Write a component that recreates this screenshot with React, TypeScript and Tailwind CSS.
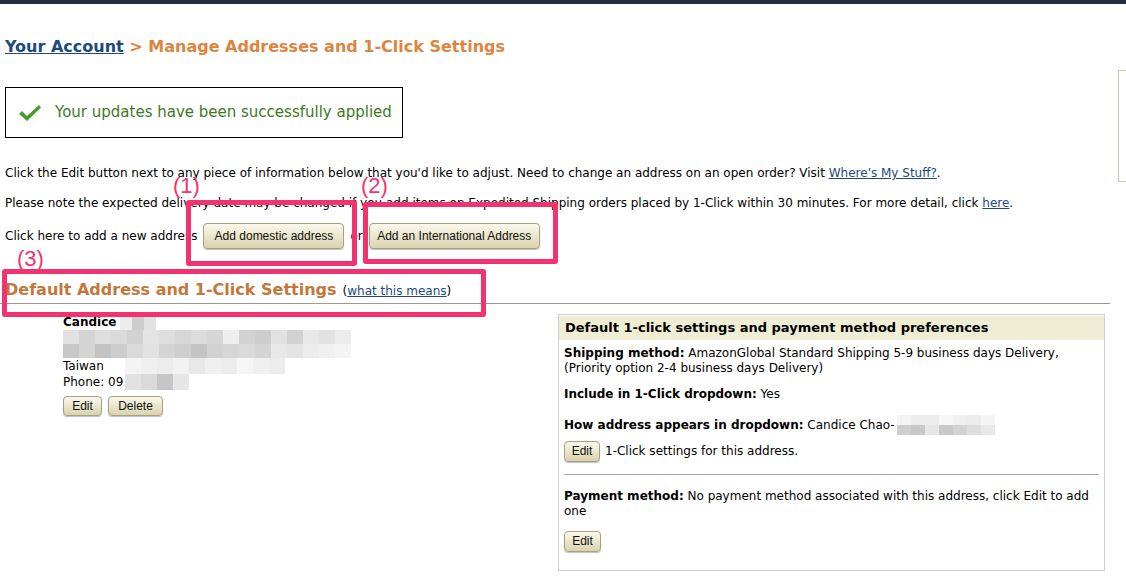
import React from "react";

const V = { fontFamily: '"DejaVu Sans", Verdana, sans-serif' };
const A = { fontFamily: '"Liberation Sans", Arial, sans-serif' };

function Btn({ children, className = "" }: { children: React.ReactNode; className?: string }) {
  return (
    <span
      style={A}
      className={
        "inline-flex items-center justify-center rounded-[4px] border border-[#a7a17f] bg-gradient-to-b from-[#fbf9ec] to-[#d9d3ae] text-[12px] text-[#111] shadow-[0_1px_1px_rgba(0,0,0,0.25)] " +
        className
      }
    >
      {children}
    </span>
  );
}

function Blocks({ shades, h = 16, w = 16 }: { shades: number[]; h?: number; w?: number }) {
  return (
    <span className="inline-flex">
      {shades.map((s, i) => (
        <span
          key={i}
          style={{ width: w, height: h, backgroundColor: `rgb(${s},${s},${s})` }}
          className="block shrink-0"
        />
      ))}
    </span>
  );
}

export default function App() {
  return (
    <div className="w-[1126px] h-[583px] overflow-hidden bg-white relative text-[#000]" style={V}>
      <div className="h-[4px] bg-[#232f3e]" />
      <div className="flex">
        <div className="w-[1110px] shrink-0 pl-[5px]">
          <h1 className="mt-[33px] text-[16px] font-bold leading-[20px] text-[#dd8540]">
            <span className="text-[#1b4a7f] underline">Your Account</span> &gt; Manage Addresses and 1-Click Settings
          </h1>
          <div className="mt-[30px] flex h-[51px] w-[398px] items-center border border-black pl-[11px]">
            <svg width="26" height="20" viewBox="0 0 26 20" className="mr-[12px]">
              <path d="M2 11 L5 8 L10 13 L22 2 L24 4.5 L10 18 Z" fill="#4d9a2a" />
            </svg>
            <span className="text-[15px] text-[#3c7a1e]">Your updates have been successfully applied</span>
          </div>
          <p className="mt-[27px] text-[12px] leading-[16px]">
            Click the Edit button next to any piece of information below that you'd like to adjust. Need to change an address on an open order? Visit{" "}
            <span className="text-[#1b4a7f] underline">Where's My Stuff?</span>.
          </p>
          <p className="mt-[14px] text-[12px] leading-[16px]">
            Please note the expected delivery date may be changed if you add items on Expedited Shipping orders placed by 1-Click within 30 minutes. For more detail, click{" "}
            <span className="text-[#1b4a7f] underline">here</span>.
          </p>
          <div className="mt-[12px] flex items-center text-[12px] h-[26px]">
            <span>Click here to add a new address</span>
            <Btn className="ml-[6px] h-[26px] w-[141px]">Add domestic address</Btn>
            <span className="mx-[6px]">or</span>
            <Btn className="h-[26px] w-[171px]">Add an International Address</Btn>
          </div>
          <div className="mt-[30px] flex items-baseline">
            <span className="text-[16px] leading-[22px] font-bold text-[#c4773a]">Default Address and 1-Click Settings</span>
            <span className="ml-[6px] text-[12px]">
              (<span className="text-[#1b4a7f] underline">what this means</span>)
            </span>
          </div>
          <div className="mt-[2px] ml-[-5px] h-px bg-[#999]" />
          <div className="flex">
            <div className="w-[553px] shrink-0 pl-[58px] pt-[11px] text-[12px] leading-[16px]">
              <div className="flex h-[15px] items-start">
                <span className="font-bold leading-[15px]">Candice</span>
                <span className="ml-[4px]">
                  <Blocks h={15} shades={[236, 205, 226]} w={12} />
                </span>
              </div>
              <div className="flex flex-col">
                <Blocks h={14} shades={[225, 212, 222, 218, 210, 228, 222, 215, 220, 214, 238, 210, 205, 225, 210, 232, 226, 236]} />
                <Blocks h={14} shades={[200, 212, 195, 205, 218, 226, 212, 206, 196, 210, 214, 218, 212, 232, 228, 236, 240, 244]} />
              </div>
              <div className="flex h-[16px] items-center">
                <span className="w-[62px]">Taiwan</span>
                <Blocks shades={[244, 240, 236, 242, 232, 240, 236, 246, 240, 236]} />
              </div>
              <div className="flex h-[16px] items-center">
                <span className="w-[62px]">Phone: 09</span>
                <Blocks shades={[226, 218, 198, 230]} />
              </div>
              <div className="mt-[6px] flex gap-[6px]">
                <Btn className="h-[20px] w-[39px]">Edit</Btn>
                <Btn className="h-[20px] w-[55px]">Delete</Btn>
              </div>
            </div>
            <div className="mt-[10px] w-[547px] border border-[#cfcfcf] px-[5px] pb-[18px] text-[12px] leading-[15px]">
              <div className="-mx-[5px] mt-px bg-[#efedd3] px-[6px] py-[4px] text-[13px] font-bold leading-[16px]">
                Default 1-click settings and payment method preferences
              </div>
              <p className="mt-[6px]">
                <b>Shipping method:</b> AmazonGlobal Standard Shipping 5-9 business days Delivery, (Priority option 2-4 business days Delivery)
              </p>
              <p className="mt-[11px]">
                <b>Include in 1-Click dropdown:</b> Yes
              </p>
              <p className="mt-[13px] flex items-center">
                <b>How address appears in dropdown:</b>&nbsp;Candice Chao-
                <span className="ml-[2px] flex flex-col">
                  <Blocks w={14} h={10} shades={[244, 236, 236, 246, 240, 236, 244]} />
                  <Blocks w={14} h={10} shades={[206, 200, 230, 200, 210, 222, 232]} />
                </span>
              </p>
              <div className="mt-[6px] flex items-center">
                <Btn className="h-[21px] w-[36px]">Edit</Btn>
                <span className="ml-[5px]">1-Click settings for this address.</span>
              </div>
              <div className="mt-[12px] h-px bg-[#aaa]" />
              <p className="mt-[14px]">
                <b>Payment method:</b> No payment method associated with this address, click Edit to add one
              </p>
              <div className="mt-[12px]">
                <Btn className="h-[21px] w-[37px]">Edit</Btn>
              </div>
            </div>
          </div>
        </div>
        <div className="ml-[8px] w-[200px] shrink-0">
          <div className="mt-[66px] h-[112px] border border-[#cdc9ae]" />
        </div>
      </div>

      {/* annotations */}
      <div className="absolute left-[186px] top-[200px] h-[66px] w-[171px] rounded-[3px] border-[5px] border-[#f2336f]" />
      <div className="absolute left-[363px] top-[202px] h-[62px] w-[195px] rounded-[3px] border-[5px] border-[#f2336f]" />
      <div className="absolute left-[2px] top-[269px] h-[48px] w-[484px] rounded-[3px] border-[5px] border-[#f2336f]" />
      <span style={A} className="absolute left-[173px] top-[174px] text-[22px] font-light leading-[24px] text-[#f2336f]">(1)</span>
      <span style={A} className="absolute left-[361px] top-[174px] text-[22px] font-light leading-[24px] text-[#f2336f]">(2)</span>
      <span style={A} className="absolute left-[17px] top-[247px] text-[22px] font-light leading-[24px] text-[#f2336f]">(3)</span>
    </div>
  );
}
